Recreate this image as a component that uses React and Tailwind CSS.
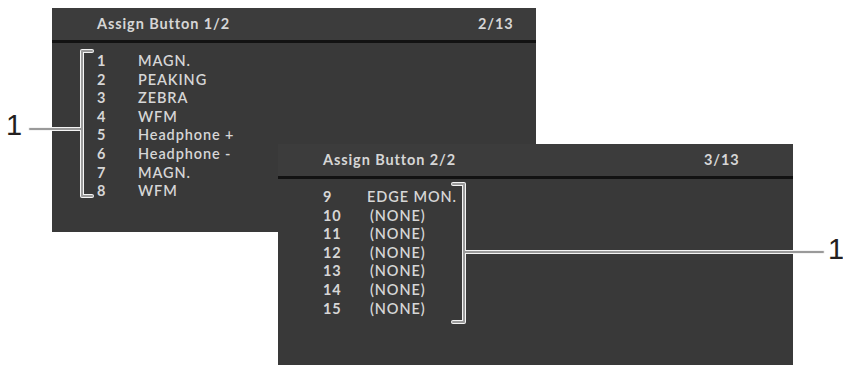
import React from "react";

const pageOne = [
    ["1", "MAGN."],
    ["2", "PEAKING"],
    ["3", "ZEBRA"],
    ["4", "WFM"],
    ["5", "Headphone +"],
    ["6", "Headphone -"],
    ["7", "MAGN."],
    ["8", "WFM"],
];

const pageTwo = [
    ["9", "EDGE MON."],
    ["10", "(NONE)"],
    ["11", "(NONE)"],
    ["12", "(NONE)"],
    ["13", "(NONE)"],
    ["14", "(NONE)"],
    ["15", "(NONE)"],
];

const font = { fontFamily: "Lato, 'Open Sans', sans-serif" };

function MenuPanel({ title, page, rows, numWidth, className }) {
    return (
        <div className={`absolute flex flex-col bg-[#393939] text-[#d6d6d6] ${className}`} style={font}>
            <div className="flex h-[32px] items-center bg-[#3c3c3c] pl-[45px] text-[14.5px] font-bold tracking-[0.9px]">
                <span className="w-[381px]">{title}</span>
                <span>{page}</span>
            </div>
            <div className="h-[3px] bg-[#121212]" />
            <div className="flex flex-col pl-[45px] pt-[9px] text-[14.5px] leading-[18.6px] tracking-[0.9px]">
                {rows.map(([num, label]) => (
                    <div key={num} className="flex">
                        <span className={`${numWidth} font-bold`}>{num}</span>
                        <span className={label === "(NONE)" ? "pl-[3px] font-semibold" : "font-semibold"}>
                            {label}
                        </span>
                    </div>
                ))}
            </div>
        </div>
    );
}

function Callouts() {
    return (
        <svg className="absolute inset-0" width="843" height="365" viewBox="0 0 843 365">
            <g fill="none" strokeLinejoin="round" strokeLinecap="round">
                <path d="M92 51 H82 V196 H92 M82 129 H30" stroke="#f4f4f4" strokeWidth="4" />
                <path d="M92 51 H82 V196 H92 M82 129 H30" stroke="#9a9a9a" strokeWidth="2" />
                <path d="M453 184 H464 V322 H453 M464 252 H823" stroke="#f4f4f4" strokeWidth="4" />
                <path d="M453 184 H464 V322 H453 M464 252 H823" stroke="#9a9a9a" strokeWidth="2" />
            </g>
        </svg>
    );
}

export default function App() {
    return (
        <div className="relative h-[365px] w-[843px] overflow-hidden bg-white">
            <MenuPanel
                title="Assign Button 1/2"
                page="2/13"
                rows={pageOne}
                numWidth="w-[41px]"
                className="left-[52px] top-[8px] h-[224px] w-[484px]"
            />
            <MenuPanel
                title="Assign Button 2/2"
                page="3/13"
                rows={pageTwo}
                numWidth="w-[44px]"
                className="left-[278px] top-[144px] h-[221px] w-[515px]"
            />
            <Callouts />
            <span
                className="absolute left-[6px] top-[111px] text-[29px] leading-none text-[#231f20]"
                style={{ fontFamily: "'Liberation Sans', Arial, sans-serif" }}
            >
                1
            </span>
            <span
                className="absolute left-[828px] top-[235px] text-[29px] leading-none text-[#231f20]"
                style={{ fontFamily: "'Liberation Sans', Arial, sans-serif" }}
            >
                1
            </span>
        </div>
    );
}
